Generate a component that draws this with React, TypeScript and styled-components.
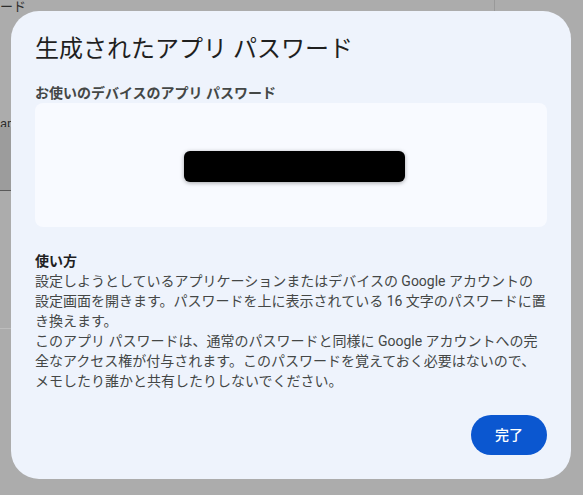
import React from "react";
import styled, { createGlobalStyle } from "styled-components";

const GlobalStyle = createGlobalStyle`
  html, body {
    margin: 0;
    padding: 0;
    background: #acacac;
    overflow: hidden;
  }
  body {
    font-family: Roboto, "Noto Sans CJK JP", sans-serif;
  }
`;

const Page = styled.div`
  position: relative;
  width: 583px;
  height: 495px;
  background: #acacac;
  overflow: hidden;
`;

const PageText = styled.span<{ $top: number; $left: number }>`
  position: absolute;
  top: ${(p) => p.$top}px;
  left: ${(p) => p.$left}px;
  font-family: Roboto, "Noto Sans CJK JP", sans-serif;
  font-size: 13px;
  line-height: 13px;
  color: #2e2e2e;
  white-space: nowrap;
`;

const PageRule = styled.div<{ $top: number; $color: string }>`
  position: absolute;
  top: ${(p) => p.$top}px;
  left: 0;
  width: 12px;
  height: 1px;
  background: ${(p) => p.$color};
`;

const PageShade = styled.div`
  position: absolute;
  top: 127px;
  left: 0;
  width: 12px;
  height: 63px;
  background: #9c9c9c;
`;

const PageVLine = styled.div`
  position: absolute;
  top: 0;
  left: 494px;
  width: 1px;
  height: 12px;
  background: #999999;
`;

const Overlay = styled.div`
  position: absolute;
  inset: 0;
  display: flex;
  align-items: flex-start;
  justify-content: flex-start;
  padding: 11px 0 0 11px;
`;

const Dialog = styled.div`
  width: 560px;
  box-sizing: border-box;
  background: #eef3fc;
  border-radius: 28px;
  padding: 24px;
  display: flex;
  flex-direction: column;
  font-family: Roboto, "Noto Sans CJK JP", sans-serif;
`;

const Title = styled.h1`
  margin: 0;
  font-size: 24px;
  line-height: 28px;
  font-weight: 400;
  color: #1f1f1f;
`;

const Label = styled.h2`
  margin: 20px 0 0 0;
  font-size: 14px;
  line-height: 20px;
  font-weight: 700;
  color: #444746;
`;

const PasswordBox = styled.div`
  height: 124px;
  background: #f8faff;
  border-radius: 8px;
  display: flex;
  align-items: center;
  justify-content: center;
  padding-left: 7px;
  padding-top: 3px;
  box-sizing: border-box;
`;

const Redaction = styled.div`
  width: 221px;
  height: 31px;
  background: #000;
  border-radius: 6px;
  box-shadow: 0 1px 4px rgba(0, 0, 0, 0.35);
`;

const HowTo = styled.h3`
  margin: 24px 0 0 0;
  font-size: 14px;
  line-height: 20px;
  font-weight: 700;
  color: #1f1f1f;
`;

const Body = styled.p`
  margin: 0;
  font-size: 14px;
  line-height: 20px;
  font-weight: 400;
  color: #444746;
  white-space: nowrap;
`;

const Actions = styled.div`
  display: flex;
  justify-content: flex-end;
  margin-top: 24px;
`;

const DoneButton = styled.button`
  height: 40px;
  padding: 0 24px;
  border: none;
  border-radius: 20px;
  background: #0b57d0;
  color: #ffffff;
  font-family: Roboto, "Noto Sans CJK JP", sans-serif;
  font-size: 14px;
  font-weight: 500;
  line-height: 20px;
  cursor: pointer;
`;

export default function App() {
  return (
    <>
      <GlobalStyle />
      <Page>
        <PageText $top={0} $left={0}>ード</PageText>
        <PageVLine />
        <PageText $top={117} $left={0}>ap</PageText>
        <PageShade />
        <PageRule $top={190} $color="#5a5a5a" />
        <PageRule $top={328} $color="#bdbdbd" />
        <Overlay>
          <Dialog role="dialog">
            <Title>生成されたアプリ パスワード</Title>
            <Label>お使いのデバイスのアプリ パスワード</Label>
            <PasswordBox>
              <Redaction />
            </PasswordBox>
            <HowTo>使い方</HowTo>
            <Body>
              設定しようとしているアプリケーションまたはデバイスの Google アカウントの
              <br />
              設定画面を開きます。パスワードを上に表示されている 16 文字のパスワードに置
              <br />
              き換えます。
            </Body>
            <Body>
              このアプリ パスワードは、通常のパスワードと同様に Google アカウントへの完
              <br />
              全なアクセス権が付与されます。このパスワードを覚えておく必要はないので、
              <br />
              メモしたり誰かと共有したりしないでください。
            </Body>
            <Actions>
              <DoneButton>完了</DoneButton>
            </Actions>
          </Dialog>
        </Overlay>
      </Page>
    </>
  );
}
